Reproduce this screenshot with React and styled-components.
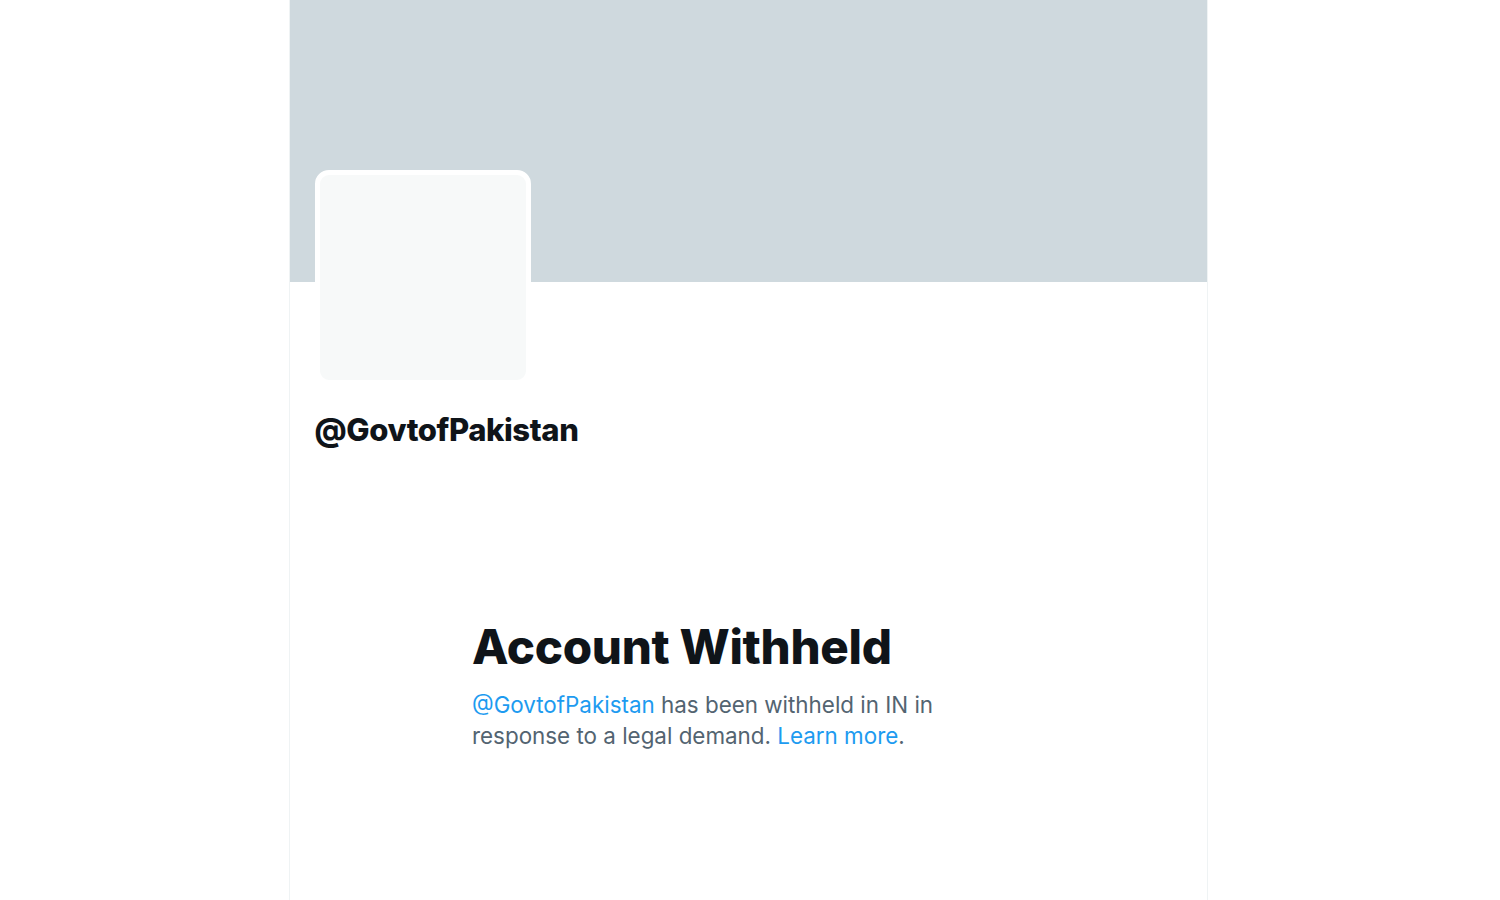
import React from 'react';
import styled, { createGlobalStyle } from 'styled-components';

const Global = createGlobalStyle`
  html, body {
    margin: 0;
    padding: 0;
    background: #ffffff;
  }
  body {
    font-family: Inter, "Noto Sans", "Liberation Sans", sans-serif;
  }
`

const Page = styled.div`
  display: flex;
  justify-content: center;
  min-height: 900px;
  padding-right: 4px;
`

const Column = styled.main`
  width: 917px;
  min-height: 900px;
  border-left: 1px solid #eff3f4;
  border-right: 1px solid #eff3f4;
  display: flex;
  flex-direction: column;
`

const Banner = styled.div`
  height: 282px;
  background: #cfd9de;
`

const Header = styled.div`
  padding: 0 25px;
  display: flex;
  flex-direction: column;
`

const Avatar = styled.div`
  width: 206px;
  height: 205px;
  margin-top: -112px;
  border: 5px solid #ffffff;
  border-radius: 14px;
  background: #f7f9f9;
`

const Handle = styled.h2`
  margin: 25px 0 0;
  font-size: 31px;
  line-height: 40px;
  font-weight: 800;
  color: #0f1419;
  letter-spacing: -0.4px;
`

const Empty = styled.section`
  width: 552px;
  margin: 169px auto 0;
`

const Title = styled.h1`
  margin: 0;
  font-size: 47.5px;
  line-height: 56px;
  font-weight: 800;
  color: #0f1419;
  letter-spacing: -0.3px;
`

const Text = styled.p`
  margin: 14px 0 0;
  width: 478px;
  font-size: 22.4px;
  line-height: 31px;
  color: #536471;
`

const Link = styled.a`
  color: #1d9bf0;
  text-decoration: none;
`

export default function App() {
  return (
    <Page>
      <Global />
      <Column>
        <Banner />
        <Header>
          <Avatar />
          <Handle>@GovtofPakistan</Handle>
        </Header>
        <Empty>
          <Title>Account Withheld</Title>
          <Text>
            <Link>@GovtofPakistan</Link> has been withheld in IN in response to a legal demand. <Link>Learn more</Link>.
          </Text>
        </Empty>
      </Column>
    </Page>
  )
}
